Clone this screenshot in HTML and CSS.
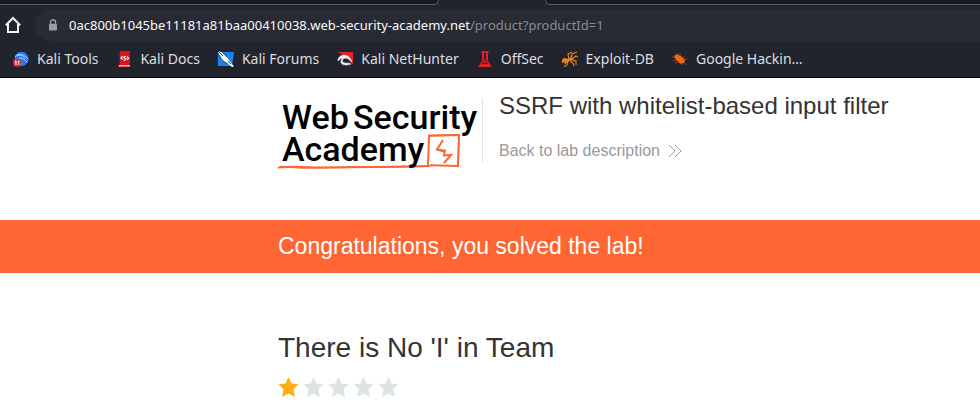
FILE: index.html
```html
<!DOCTYPE html>
<html lang="en">
<head>
<meta charset="utf-8">
<title>SSRF with whitelist-based input filter</title>
<link rel="stylesheet" href="styles.css">
</head>
<body>
<header class="browser">
  <div class="tabs"><span class="tab tab-left"></span><span class="tab-active"></span><span class="tab tab-right"></span></div>
  <div class="toolbar">
    <button class="home" type="button" aria-label="Home">
      <svg width="18" height="18" viewBox="0 0 18 18"><path d="M1.800 9.200 9 2l7.200 7.200M4 8v8h10V8" fill="none" stroke="#f4f4f6" stroke-width="2"/></svg>
    </button>
    <div class="address">
      <svg class="lock" width="10" height="12" viewBox="0 0 10 12"><path d="M2.500 5V3.200a2.500 2.500 0 0 1 5 0V5" fill="none" stroke="#9c9da4" stroke-width="1.400"/><rect x="1" y="4.700" width="8" height="6.800" rx="1" fill="#9c9da4"/></svg>
      <span class="url"><span class="host">0ac800b1045be11181a81baa00410038.web-security-academy.net</span>/product?productId=1</span>
    </div>
  </div>
  <nav class="bookmarks" aria-label="Bookmarks">
    <a href="#"><svg viewBox="0 0 16 16"><circle cx="8.500" cy="8" r="7.200" fill="#2878ee"/><path d="M2 5.500C7 2.500 11 5 12 7.500M4 4c5-1.500 8 .5 11 4M6 7.500c3-1.500 5 .5 8 3.500" fill="none" stroke="#b8d5ff" stroke-width="1"/><circle cx="4" cy="11.700" r="4" fill="#e62b32"/><path d="M2 10.500l1-.5v4M4.800 10.500l1-.5v4" fill="none" stroke="#fff" stroke-width="1"/></svg>Kali Tools</a>
    <a href="#"><svg viewBox="0 0 16 16"><path d="M2 0h12v16H2z" fill="#dc1218"/><path d="M2 0h2v14H2z" fill="#193266"/><path d="M3 14h11v1.500H3z" fill="#d7b9bc"/><path d="M6.500 5 4.800 7l2 1.500M11 5.500l1.600 1.700L11 9M9.800 5 7.500 6.500l2.400 1.400L8 10" fill="none" stroke="#fff" stroke-width="1.100"/></svg>Kali Docs</a>
    <a href="#"><svg viewBox="0 0 16 16"><path d="M0 1h16l-2 14H0z" fill="#1784f6"/><path d="M0 0l3 1 5 4 3 4 5 6.500-2 .5-5-4-5-3-2-4z" fill="#f4f4f4"/><path d="M0 0l5 5M5 2l4 4M10 10l3 3M1 4l3 5 5 4" fill="none" stroke="#222936" stroke-width=".8"/></svg>Kali Forums</a>
    <a href="#"><svg viewBox="0 0 16 16"><path d="M1 1h15v13L9 6z" fill="#e5222c"/><path d="M1 10c0-5 5-7 9-5 3 1 4 4 5 6-2-2-4-4-6-4-4 0-5 4-2 5 3 .5 5-.5 7 1-4 2-10 1-10-2 0-2 1-3 2-4-2 0-3 1-5 3z" fill="#f4f0f1" stroke="#f4f0f1" stroke-width=".8"/><path d="M4 13c2 2 6 2 9 1" fill="none" stroke="#9e2530" stroke-width="1"/></svg>Kali NetHunter</a>
    <a href="#"><svg viewBox="0 0 16 16"><path d="M4 0h8l-1 2v8l4 6H1l4-6V2z" fill="#dc2027"/><path d="M7 2h2v7l2 4H5l2-4z" fill="#491a22"/><path d="M8 8l1.500 4h-3z" fill="#e5242a"/></svg>OffSec</a>
    <a href="#"><svg viewBox="0 0 16 16"><path d="M0 9c2-3 4-2 5-1l3-1c2-2 4 0 3 2L7 10l-5 4 1-3-3 1z" fill="#ed8518"/><path d="M7 8 6 3l4-2M9 7l1-4 5-2M10 8l4-3 2 1M10 9l4 1v4M8 10l3 2 1 3M6 10l-1 4-3 2" fill="none" stroke="#ed8518" stroke-width="1.100"/></svg>Exploit-DB</a>
    <a href="#"><svg viewBox="0 0 16 16"><path d="M2 5l3-2 4 2 4 4-1 3-3 1-5-4z" fill="#f26511"/><path d="M5 4 4 2M8 5 8 2M11 7l2-2M12 9l3-1M12 11l2 3M9 12l1 2M7 11l-4 1M4 9 1 10M3 6H0" fill="none" stroke="#a64a1a" stroke-width=".8"/></svg>Google Hackin…</a>
  </nav>
</header>
<main>
  <section class="lab-header">
    <svg class="logo" width="200" height="74" viewBox="0 0 200 74" role="img" aria-label="Web Security Academy">
      <path d="M0 69.500c18-2 34 .5 53 0 33-1 62 0 97-1.500l1-30.500 30-.5-1 31-28-.8" fill="none" stroke="#ff6633" stroke-width="2"/>
      <path d="M2 68.500l22 1.500 128-2M150 38l31-1-1 31" fill="none" stroke="#ff6633" stroke-width="1.500"/>
      <path d="M165 42l-6 9.500 8 1-1 4.500M159 51.500l7 2M165 57.500l8-.5-7 8M173 57l-7 8" fill="none" stroke="#ff6633" stroke-width="2"/>
      <text x="4" y="31" class="logo-text">Web</text>
      <text x="75" y="31" class="logo-text">Security</text>
      <text x="4" y="63" class="logo-text">Academy</text>
    </svg>
    <div class="title-block">
      <h2>SSRF with whitelist-based input filter</h2>
      <a class="back" href="#">Back to lab description <svg width="14" height="14" viewBox="0 0 14 14"><path d="M1 1l6 6-6 6M7 1l6 6-6 6" fill="none" stroke="#999" stroke-width="1"/></svg></a>
    </div>
  </section>
  <section class="banner"><p>Congratulations, you solved the lab!</p></section>
  <section class="product">
    <h1>There is No 'I' in Team</h1>
    <div class="stars" role="img" aria-label="1 out of 5 stars">
      <svg class="on" viewBox="0 0 20 20"><path d="M10 0l3 6.500 7 .8-5 5L16.500 20 10 16.500 3.500 20 5 12.300l-5-5 7-.8z"/></svg>
      <svg viewBox="0 0 20 20"><path d="M10 0l3 6.500 7 .8-5 5L16.500 20 10 16.500 3.500 20 5 12.300l-5-5 7-.8z"/></svg>
      <svg viewBox="0 0 20 20"><path d="M10 0l3 6.500 7 .8-5 5L16.500 20 10 16.500 3.500 20 5 12.300l-5-5 7-.8z"/></svg>
      <svg viewBox="0 0 20 20"><path d="M10 0l3 6.500 7 .8-5 5L16.500 20 10 16.500 3.500 20 5 12.300l-5-5 7-.8z"/></svg>
      <svg viewBox="0 0 20 20"><path d="M10 0l3 6.500 7 .8-5 5L16.500 20 10 16.500 3.500 20 5 12.300l-5-5 7-.8z"/></svg>
    </div>
  </section>
</main>
</body>
</html>
```
FILE: styles.css
```css
* { box-sizing: border-box; }
body { margin: 0; background: #fff; color: #333332; font-family: "Liberation Sans", Arial, sans-serif; }
h1, h2, p { margin: 0; font-weight: 400; }
a { text-decoration: none; }
svg { flex: none; }

.browser { background: #22242d; border-bottom: 1px solid #08090c; font-family: "Noto Sans", sans-serif; }
.tabs { display: flex; height: 5px; }
.tab { background: #181a1f; border-bottom: 1px solid #5b5c61; }
.tab-left { flex: 439; border-right: 1px solid #5b5c61; border-bottom-right-radius: 5px; }
.tab-active { flex: 106; }
.tab-right { flex: 435; border-left: 1px solid #5b5c61; border-bottom-left-radius: 5px; }
.toolbar { display: flex; align-items: center; padding-top: 4px; }
.home { display: flex; margin: 0 13px 0 4px; padding: 0; border: 0; background: none; }
.address { display: flex; flex: 1; align-items: center; gap: 11px; height: 32px; padding-left: 13px; border-radius: 16px 0 0 16px; background: #282a34; }
.url { color: #898b92; font-size: 13px; line-height: 20px; white-space: nowrap; }
.host { color: #fafafb; }
.bookmarks { display: flex; gap: 18px; height: 36px; padding-left: 13px; }
.bookmarks a { display: flex; align-items: center; gap: 8px; color: #dddde0; font-size: 14px; line-height: 20px; white-space: nowrap; }
.bookmarks svg { width: 16px; height: 16px; }

.lab-header, .banner, .product { padding-left: 278px; }
.lab-header { display: flex; height: 142px; padding-top: 20px; }
.logo { overflow: visible; }
.logo-text { fill: #000; font: 500 34px Roboto, sans-serif; }
.title-block { display: flex; flex-direction: column; align-items: flex-start; gap: 19px; height: 64px; margin: 0 0 0 4px; padding-left: 16px; border-left: 1px solid #e3e3e3; }
h2 { margin-top: -8px; font-size: 24px; line-height: 32px; white-space: nowrap; }
.back { display: flex; align-items: center; gap: 8px; color: #999; font-size: 16px; line-height: 20px; white-space: nowrap; }
.banner { padding-top: 10px; padding-bottom: 11px; background: #ff6633; color: #fff; font-size: 23px; line-height: 32px; }
.product { padding-top: 58px; }
h1 { font-size: 28px; line-height: 34px; }
.stars { display: flex; gap: 4px; margin-top: 12px; }
.stars svg { width: 21px; height: 20px; fill: #dce4e6; }
.stars .on { fill: #ffad14; }
```
